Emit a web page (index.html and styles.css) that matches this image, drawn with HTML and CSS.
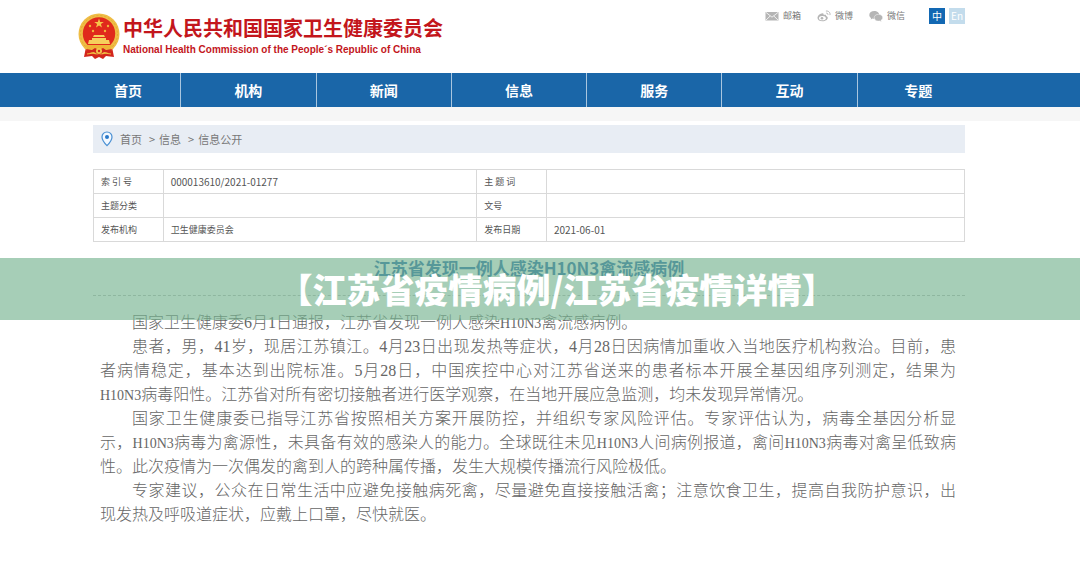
FILE: index.html
```html
<!DOCTYPE html>
<html lang="zh-CN">
<head>
<meta charset="utf-8">
<meta name="viewport" content="width=device-width, initial-scale=1">
<title>江苏省发现一例人感染H10N3禽流感病例</title>
<link rel="stylesheet" href="styles.css">
</head>
<body>
<header class="site-header">
  <a class="brand" href="#">
    <svg class="emblem" viewBox="0 0 42 46" aria-hidden="true">
      <path d="M8 34 L6 44 L14 43 L17 46 L21 44 L25 46 L28 43 L36 44 L34 34Z" fill="#d3251c"/>
      <circle cx="21" cy="21" r="20.5" fill="#efbd45"/>
      <circle cx="21" cy="21" r="18.5" fill="none" stroke="#e3a838" stroke-width="1" stroke-dasharray="2 2"/>
      <circle cx="21" cy="20.5" r="16.2" fill="#e0291c"/>
      <path d="M21 5.500l1.200 3.400h3.600l-2.900 2.100 1.100 3.500-3-2.100-3 2.100 1.100-3.500-2.900-2.100h3.600z" fill="#f6c649"/>
      <g fill="#f2b43c"><circle cx="12" cy="13" r="1.200"/><circle cx="30" cy="13" r="1.200"/><circle cx="15" cy="18" r="1.200"/><circle cx="27" cy="18" r="1.200"/></g>
      <path d="M15 24l1-2h10l1 2zM14 25h14v2h3l1 4H10l1-4h3z" fill="#f6cf5c"/>
      <path d="M7 32h28l-3 4H10z" fill="#efb437"/>
      <path d="M8 36l6 1 3-2 4 2 4-2 3 2 6-1-2 4-6-1-5 3-5-3-6 1z" fill="#d3251c"/>
      <circle cx="21" cy="38" r="3" fill="#f3c44c"/><circle cx="21" cy="38" r="1.200" fill="#d3251c"/>
      <path d="M9 41l7-1M33 41l-7-1" stroke="#f0b83e" stroke-width="1"/>
    </svg>
    <span class="brand-text">
      <span class="brand-cn">中华人民共和国国家卫生健康委员会</span>
      <span class="brand-en">National Health Commission of the People´s Republic of China</span>
    </span>
  </a>
  <div class="tools">
    <a class="tool" href="#">
      <svg viewBox="0 0 14 12" aria-hidden="true"><path d="M.5 2h13v8.500H.5z" fill="#b5b5b5"/><path d="M.8 2.300L7 7.200l6.200-4.900M1 10l4.200-4M13 10L8.800 6" fill="none" stroke="#fff" stroke-width=".8"/></svg>
      邮箱</a>
    <a class="tool" href="#">
      <svg viewBox="0 0 14 12" aria-hidden="true"><path d="M5.600 3.200C3 3.300.5 5.700.5 8c0 2 2.300 3.300 5 3.300 3 0 5.300-1.700 5.300-3.500 0-1-.8-1.500-1.700-1.800.4-1.300-.8-1.600-2.500-1 .3-1-.1-1.800-1-1.800z" fill="#b5b5b5"/><ellipse cx="5.400" cy="8.200" rx="3.400" ry="2.100" fill="#fff"/><circle cx="5" cy="8.300" r="1.300" fill="#b5b5b5"/><path d="M8.900 1.100c2.700-.5 4.700 1.600 4 4M9.200 3.100c1.200-.2 2 .7 1.700 1.700" fill="none" stroke="#b5b5b5" stroke-width="1"/></svg>
      微博</a>
    <a class="tool" href="#">
      <svg viewBox="0 0 14 12" aria-hidden="true"><path d="M5.300 1C2.500 1 .3 2.700.3 4.900c0 1.300.7 2.300 1.800 3L1.700 9.500l1.800-.9c.6.2 1.200.2 1.800.2 2.700 0 5-1.700 5-3.900S8 1 5.300 1z" fill="#b5b5b5"/><path d="M9.500 4.300c-2.500 0-4.300 1.500-4.300 3.400S7 11.100 9.500 11.100l1.300-.2 1.600.9-.4-1.500c1-.6 1.700-1.500 1.700-2.600 0-1.900-1.800-3.400-4.200-3.400z" fill="#b5b5b5" stroke="#fff" stroke-width=".5"/></svg>
      微信</a>
    <div class="langs"><a class="lang lang-on" href="#">中</a><a class="lang" href="#">En</a></div>
  </div>
</header>
<nav class="nav">
  <div class="nav-inner">
    <a href="#">首页</a><a href="#">机构</a><a href="#">新闻</a><a href="#">信息</a><a href="#">服务</a><a href="#">互动</a><a href="#">专题</a>
  </div>
</nav>
<div class="band"></div>
<main class="content">
  <div class="crumbs">
    <svg class="pin" viewBox="0 0 12 16" aria-hidden="true"><path d="M6 1C3.200 1 1 3.200 1 5.900 1 9.300 6 14.700 6 14.700s5-5.400 5-8.800C11 3.200 8.800 1 6 1z" fill="#f4f9ff" stroke="#4a90d3" stroke-width="1.200"/><circle cx="6" cy="6" r="2" fill="#2878c8"/></svg>
    <a href="#">首页</a><span>&gt;</span><a href="#">信息</a><span>&gt;</span><a href="#">信息公开</a>
  </div>
  <table class="meta">
    <colgroup><col class="c-label"><col class="c-left"><col class="c-label"><col class="c-right"></colgroup>
    <tr><th scope="row">索 引 号</th><td class="num">000013610/2021-01277</td><th scope="row">主 题 词</th><td></td></tr>
    <tr><th scope="row">主题分类</th><td></td><th scope="row">文号</th><td></td></tr>
    <tr><th scope="row">发布机构</th><td>卫生健康委员会</td><th scope="row">发布日期</th><td class="num">2021-06-01</td></tr>
  </table>
  <article class="article">
    <h1>江苏省发现一例人感染H10N3禽流感病例</h1>
    <div class="banner">【江苏省疫情病例/江苏省疫情详情】</div>
    <div class="body">
      <p>国家卫生健康委6月1日通报，江苏省发现一例人感染<span class="strain">H10N3</span>禽流感病例。</p>
      <p><span class="full">患者，男，41岁，现居江苏镇江。4月23日出现发热等症状，4月28日因病情加重收入当地医疗机构救治。目前，患</span><span class="full">者病情稳定，基本达到出院标准。5月28日，中国疾控中心对江苏省送来的患者标本开展全基因组序列测定，结果为</span><span class="strain">H10N3</span>病毒阳性。江苏省对所有密切接触者进行医学观察，在当地开展应急监测，均未发现异常情况。</p>
      <p><span class="full">国家卫生健康委已指导江苏省按照相关方案开展防控，并组织专家风险评估。专家评估认为，病毒全基因分析显</span><span class="full">示，<span class="strain">H10N3</span>病毒为禽源性，未具备有效的感染人的能力。全球既往未见<span class="strain">H10N3</span>人间病例报道，禽间<span class="strain">H10N3</span>病毒对禽呈低致病</span>性。此次疫情为一次偶发的禽到人的跨种属传播，发生大规模传播流行风险极低。</p>
      <p><span class="full">专家建议，公众在日常生活中应避免接触病死禽，尽量避免直接接触活禽；注意饮食卫生，提高自我防护意识，出</span>现发热及呼吸道症状，应戴上口罩，尽快就医。</p>
    </div>
  </article>
</main>
</body>
</html>
```
FILE: styles.css
```css
* { box-sizing: border-box; }
body {
  margin: 0;
  background: #fff;
  color: #666;
  font-family: "Noto Sans CJK SC", sans-serif;
}
a { color: inherit; text-decoration: none; }
svg { display: block; flex: none; }

.site-header {
  display: flex;
  justify-content: space-between;
  align-items: flex-start;
  height: 73px;
  padding: 8px 115px 0 78px;
}
.brand { display: flex; gap: 3px; padding-top: 5px; color: #c3161c; }
.emblem { width: 42px; height: 46px; }
.brand-text { display: flex; flex-direction: column; font-weight: 700; }
.brand-cn { font-size: 20px; line-height: 30px; }
.brand-en { font-family: "Liberation Sans", sans-serif; font-size: 10px; line-height: 14px; }

.tools { display: flex; align-items: center; gap: 16px; font-size: 9px; line-height: 16px; color: #777; }
.tool { display: flex; align-items: center; gap: 4px; }
.tool svg { width: 14px; height: 12px; }
.langs { display: flex; gap: 4px; margin-left: 8px; }
.lang { width: 16px; background: #c3dcec; color: #fff; text-align: center; font-size: 10px; }
.lang-on { background: #1268b3; }

.nav { background: #1a66a8; padding: 0 101px 0 76px; }
.nav-inner { display: grid; grid-template-columns: 105fr repeat(5, 135fr) 121fr; }
.nav a {
  color: #fff;
  font-size: 14px;
  font-weight: 700;
  line-height: 34px;
  text-align: center;
  border-right: 1px solid #a9c6df;
}
.nav a:last-child { border-right: 0; }
.band { height: 14px; background: #f6f6f6; }

.content { padding: 4px 115px 0 93px; }
.crumbs {
  display: flex;
  align-items: center;
  gap: 7px;
  height: 28px;
  padding-left: 8px;
  background: #e8edf4;
  color: #777;
  font-size: 11px;
  line-height: 16px;
}
.crumbs span + a { margin-left: -3px; }
.pin { width: 12px; height: 16px; }

.meta {
  width: 100%;
  margin-top: 16px;
  border-collapse: collapse;
  table-layout: fixed;
  color: #555;
  font-size: 9px;
  line-height: 14px;
}
.c-label { width: 8%; }
.c-left { width: 36%; }
.c-right { width: 48%; }
.meta th, .meta td {
  height: 24px;
  padding: 0 7px;
  border: 1px solid #d9d9d9;
  font-weight: 400;
  text-align: left;
}
.meta .num { font-size: 10px; }

.article { position: relative; margin-top: 15px; }
.article h1 {
  margin: 0;
  padding-bottom: 16px;
  border-bottom: 1px dashed #bbb;
  color: #1a65a8;
  font-size: 17px;
  line-height: 22px;
  text-align: center;
}
.banner {
  position: absolute;
  top: 1px;
  left: -93px;
  right: -115px;
  padding-left: 34px;
  background: rgba(118, 180, 144, 0.65);
  color: #fff;
  font-size: 34px;
  font-weight: 900;
  line-height: 62px;
  text-align: center;
}
.body {
  padding: 15px 9px 0 7px;
  font-family: "Liberation Serif", "Noto Sans CJK SC", serif;
  font-size: 16px;
  font-weight: 300;
  line-height: 24px;
}
.body p { margin: 0; text-indent: 2em; }
.full { display: block; text-align: justify; text-align-last: justify; }
.full + .full { text-indent: 0; }
.strain { font-size: 14px; line-height: 1; }
```
